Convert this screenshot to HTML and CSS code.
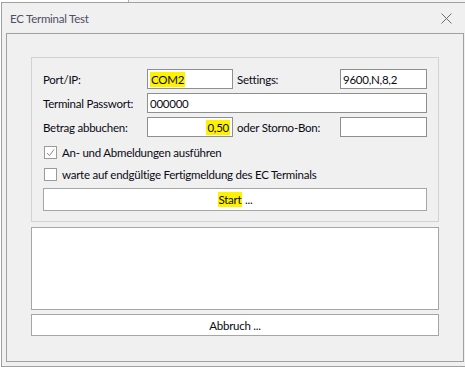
FILE: index.html
```html
<!DOCTYPE html>
<html lang="de">
<head>
  <meta charset="UTF-8">
  <title>EC Terminal Test</title>
  <link rel="stylesheet" href="styles.css">
</head>
<body>
<div class="strip"><div class="strip-left"></div></div>
<div class="window">
  <div class="titlebar">
    <span class="title">EC Terminal Test</span>
    <svg class="close" width="11" height="11" viewBox="0 0 11 11">
      <path d="M0.5 0.5 L10.5 10.5 M10.5 0.5 L0.5 10.5" stroke="#6d6d6d" stroke-width="1" fill="none"/>
    </svg>
  </div>
  <div class="frame">
    <div class="group">
      <div class="fields">
        <label class="lbl">Port/IP:</label>
        <div class="input"><span class="mark">COM2</span></div>
        <label class="lbl lbl2">Settings:</label>
        <div class="input">9600,N,8,2</div>

        <label class="lbl">Terminal Passwort:</label>
        <div class="input wide">000000</div>

        <label class="lbl">Betrag abbuchen:</label>
        <div class="input right"><span class="mark">0,50</span></div>
        <label class="lbl lbl2">oder Storno-Bon:</label>
        <div class="input"></div>
      </div>

      <div class="check">
        <span class="box">
          <svg width="11" height="11" viewBox="0 0 11 11">
            <path d="M2 6 L4.5 8.5 L9 2.5" stroke="#8a8a8a" stroke-width="1" fill="none"/>
          </svg>
        </span>
        <span>An- und Abmeldungen ausführen</span>
      </div>
      <div class="check">
        <span class="box"></span>
        <span>warte auf endgültige Fertigmeldung des EC Terminals</span>
      </div>

      <div class="button start"><span class="mark">Start</span>&nbsp;...</div>
    </div>

    <div class="log"></div>
    <div class="button abort">Abbruch ...</div>
  </div>
</div>
</body>
</html>
```

FILE: styles.css
```css
:root {
  --bg: #f0f0f0;
  --frame: #a0a0a0;
  --field: #8f8f8f;
  --mark: #fff200;
  --ui: Lato, "Liberation Sans", sans-serif;
}
html, body {
  margin: 0;
  padding: 0;
  background: #fff;
  overflow: hidden;
  font-family: var(--ui);
  font-size: 11.5px;
  letter-spacing: -0.25px;
  color: #0a0a14;
}
.strip {
  height: 2px;
  background: #f4f4f4;
}
.strip-left {
  width: 128px;
  height: 2px;
  background: #fff;
  border-right: 1px solid #b0b0b0;
}
.window {
  margin-left: 1px;
  width: 480px;
  height: 363px;
  background: var(--bg);
  border: 1px solid var(--frame);
  border-right: 0;
}
.titlebar {
  height: 30px;
  display: flex;
  align-items: center;
  padding-left: 8px;
  padding-right: 16px;
}
.title {
  color: #4e4e66;
  flex: 0 0 auto;
  width: 431px;
}
.close {
  display: block;
}
.frame {
  margin-left: 4px;
  border: 1px solid var(--frame);
  padding: 23px 0 0 24px;
  box-sizing: border-box;
  width: 458px;
  height: 329px;
}
.group {
  width: 408px;
  height: 165px;
  box-sizing: border-box;
  border: 1px solid #d2d2d2;
  padding: 11px 11px 0 11px;
}
.fields {
  display: grid;
  grid-template-columns: 104px 86px 107px 87px;
  grid-auto-rows: 20px;
  row-gap: 4px;
}
.lbl {
  display: flex;
  align-items: center;
  white-space: nowrap;
}
.lbl2 {
  padding-left: 4px;
}
.input {
  background: #fff;
  border: 1px solid var(--field);
  display: flex;
  align-items: center;
  padding: 0 2px;
  box-sizing: border-box;
  white-space: nowrap;
  overflow: hidden;
}
.input.wide {
  grid-column: 2 / 5;
}
.input.right {
  justify-content: flex-end;
}
.mark {
  background: var(--mark);
  padding: 1px;
}
.check {
  display: flex;
  align-items: center;
  gap: 5px;
  height: 14px;
  margin-top: 8px;
  padding-left: 1px;
}
.box {
  width: 13px;
  height: 13px;
  box-sizing: border-box;
  border: 1px solid #9a9a9a;
  background: #fff;
  display: flex;
  align-items: center;
  justify-content: center;
}
.box svg {
  display: block;
}
.button {
  background: #fff;
  border: 1px solid #a6a6a6;
  box-sizing: border-box;
  display: flex;
  align-items: center;
  justify-content: center;
}
.start {
  height: 23px;
  margin-top: 7px;
}
.log {
  margin-top: 5px;
  width: 408px;
  height: 83px;
  box-sizing: border-box;
  background: #fff;
  border: 1px solid #a6a6a6;
}
.abort {
  margin-top: 4px;
  width: 408px;
  height: 22px;
}
```
